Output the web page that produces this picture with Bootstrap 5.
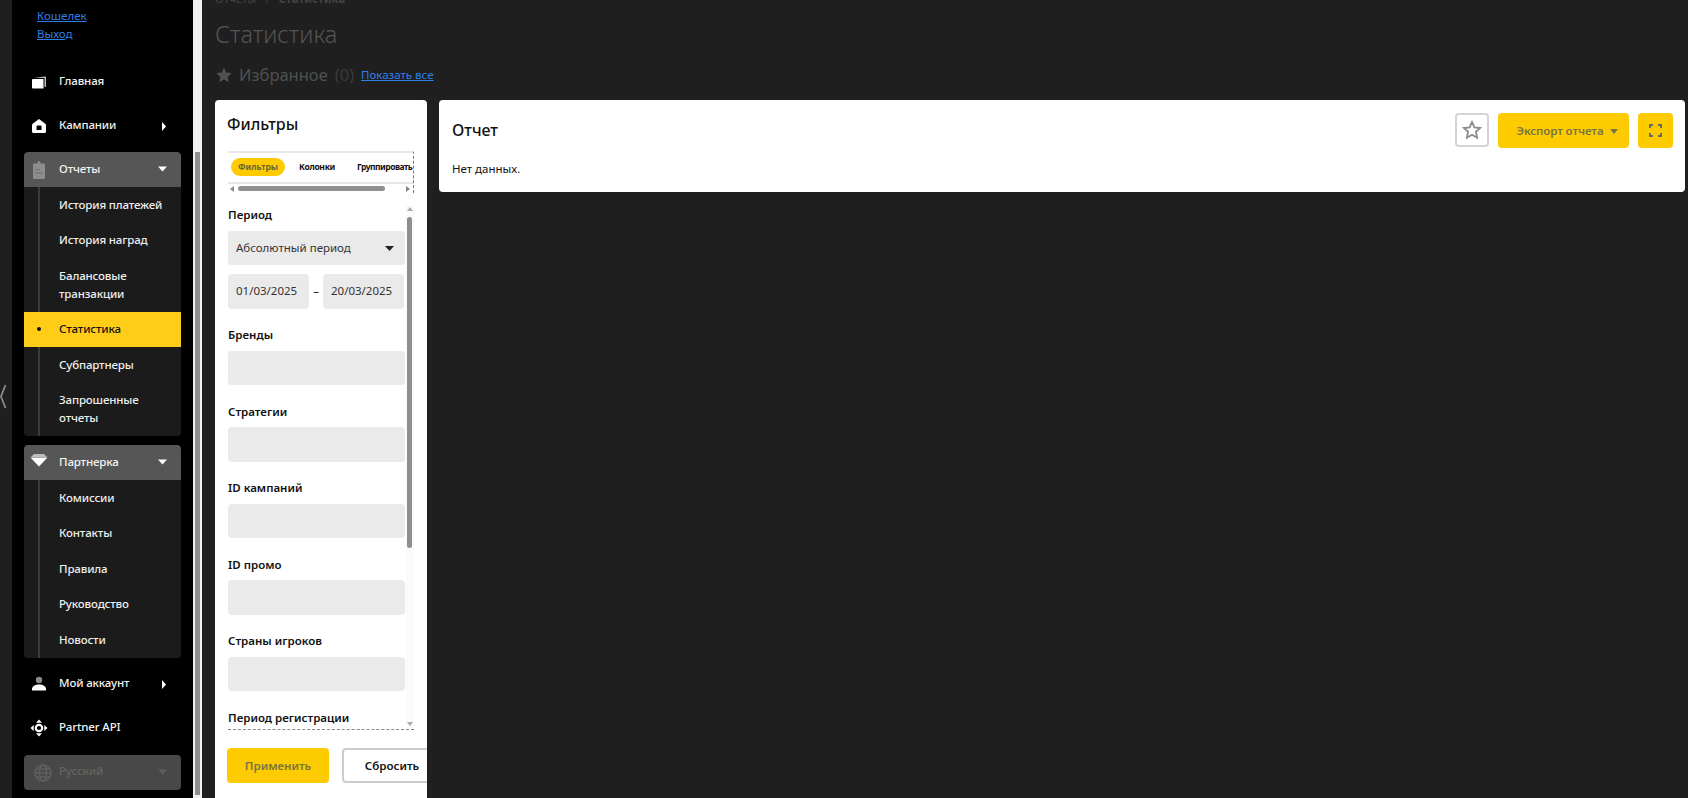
<!DOCTYPE html>
<html lang="ru">
<head>
<meta charset="utf-8">
<title>Статистика</title>
<link href="https://cdn.jsdelivr.net/npm/bootstrap@5.3.0/dist/css/bootstrap.min.css" rel="stylesheet">
<style>
html,body{height:798px;overflow:hidden}
body{background:#1f1f1f;font-family:"Noto Sans",sans-serif;font-size:11.5px;color:#111}
.rail{width:12px;flex:none}
.rail svg{display:block;margin-top:384px}
.side{width:181px;flex:none;background:#000;height:798px;padding:7px 12px 0}
.side-links{padding-left:13px;height:57px;line-height:18px}
.side-links a{display:block;color:#2f7fe8}
.side-strip{width:9px;flex:none;background:#f1f1f1;height:798px;padding:152px 2px 3px}
.side-thumb{height:100%;background:#8f8f8f;width:5px}
.mrow{height:36px;margin-bottom:8px;padding-bottom:2px;color:#f3f3f3;font-weight:500;letter-spacing:-.15px;display:flex;align-items:center;position:relative;padding-left:35px}
.mrow svg.mi{position:absolute;left:5px;top:8px}
.mrow svg.ar{position:absolute;right:14px;top:14px}
.mgroup{background:#1b1b1b;border-radius:4px;overflow:hidden;margin-bottom:9px;position:relative}
.mgroup.last-group{margin-bottom:8px}
.mgroup::before{content:"";position:absolute;left:14px;top:35px;bottom:0;width:2px;background:#3a3a3a}
.mhead{height:35px;background:#565656;margin:0;border-radius:4px 4px 0 0}
.msub{display:block;position:relative;padding:8.75px 6px 8.75px 35px;line-height:18px;color:#eee;font-weight:500;letter-spacing:-.15px}
.msub.on{background:#ffcd17;color:#111;z-index:1}
.msub.on::before{content:"";position:absolute;left:13px;top:15.5px;width:4px;height:4px;border-radius:50%;background:#111}
.mlang{height:35px;background:#484848;border-radius:4px;color:#656565;margin:9px 0 0}
.mlang svg.mi{top:9px;left:10px}
.mainwrap{flex:1;min-width:0;padding:0 3px 0 13px;height:798px;overflow:hidden}
.crumbs{margin-top:-10px;height:28px;line-height:18px;color:#434343}
.crumbs b{font-weight:700}
.crumbs i{font-style:normal;margin:0 9px}
.ttl{font-size:23.500px;font-weight:300;line-height:32px;color:#555;margin:0 0 14px}
.favs{height:22px;margin-bottom:14px;color:#505050;font-size:16.5px;line-height:22px}
.favs svg{margin:0 7px 0 1px}
.favs span{color:#3b3b3b;margin:0 7px}
.favs a{font-size:11.5px;color:#2f7fe8}
.cards-row{gap:12px}
.panel{background:#fff;border-radius:4px;border:0;flex:none}
.pf{width:212px;height:760px;overflow:hidden}
.phd{font-size:16px;font-weight:500;line-height:24px;color:#111}
.pf .phd{padding:12px 12px 1px}
.tabs{margin:14px 13px 0;height:42px;border-top:2px solid #e8e8e8;border-right:1px dashed #777;position:relative;padding:5px 3px 0;font-size:8.500px;font-weight:700}
.tabs span{line-height:18px;white-space:nowrap;flex:none}
.tabs .cur{background:#fdcb00;border-radius:9px;width:54px;text-align:center;color:#6c6535;margin-right:14px}
.tabs .t2{margin-right:22px;letter-spacing:-.3px}
.tabs .t3{letter-spacing:-.5px}
.tabs::after{content:"";position:absolute;left:0;right:0;top:29px;height:2px;background:#e8e8e8}
.hbar{position:absolute;left:10px;top:33px;width:147px;height:5px;border-radius:3px;background:#8f8f8f}
.harr{position:absolute;top:33px;width:0;height:0;border-top:3px solid transparent;border-bottom:3px solid transparent}
.form-area{margin:0 13px;height:537px;overflow:hidden;border-bottom:1px dashed #888;padding:13px 9px 0 0;position:relative}
.vtrack{position:absolute;right:0;top:12px;bottom:0;width:8px;background:#fafafa}
.vthumb{position:absolute;left:1px;top:12px;height:331px;width:5px;border-radius:3px;background:#8f8f8f}
.varr{position:absolute;left:1px;width:0;height:0;border-left:3px solid transparent;border-right:3px solid transparent}
.flabel{font-weight:600;line-height:18px;margin-bottom:6.5px;color:#111}
.fbox{height:34.5px;background:#eaeaea;border-radius:4px;margin-bottom:17.5px;padding:0 8px;line-height:34.5px;color:#333}
.fbox.first{margin-bottom:9px;position:relative}
.fbox.first svg{position:absolute;right:11px;top:15px}
.dash{width:14px;text-align:center;line-height:34.5px}
.dates .fbox{width:81px;white-space:nowrap}
.pact{padding:18px 0 0 12px;gap:13px}
.btn-y{background:#fdcb00;border:0;color:#7a7346;font-weight:600;font-size:11.5px;border-radius:4px;height:34.5px;white-space:nowrap}
.btn-y:hover,.btn-y:disabled{background:#fdcb00;color:#7a7346}
.btn-apply{width:102px;flex:none}
.btn-reset{width:100px;flex:none;height:34.5px;background:#fff;border:2px solid #ccc;border-radius:4px;font-weight:600;font-size:11.5px;color:#111;padding:0}
.pr{flex:1;min-width:0;height:92px;padding:13px 12px 0 13px}
.pr .phd{line-height:34px}
.starb{width:34px;height:34px;border:2px solid #d4d4d4;border-radius:4px;background:#fff;padding:0;margin-right:9px}
.expb{width:131px;margin-right:9px;padding:0 0 0 8px;letter-spacing:-.1px}
.expb svg{margin-left:7px;vertical-align:1px}
.fsb{width:35px;padding:0}
.nodata{margin:12px 0 0;line-height:18px;color:#111}
</style>
</head>
<body class="d-flex">
<div class="rail"><svg width="8" height="26" viewBox="0 0 8 26" fill="none" stroke="#8a8a8a" stroke-width="1.800"><path d="M5.500 1 1 12.500 5.500 24"/></svg></div>
<nav class="side">
  <div class="side-links"><a href="#">Кошелек</a><a href="#">Выход</a></div>
  <div class="mrow"><svg class="mi" width="20" height="20" viewBox="0 0 20 20"><path fill="#fff" d="M4 7h10.500v9.500H4a1 1 0 0 1-1-1V8a1 1 0 0 1 1-1Z"/><path fill="#bbb" d="M5 6l11-1.500c.5 0 1 .4 1 1V15h-1.500V6Z"/></svg>Главная</div>
  <div class="mrow"><svg class="mi" width="20" height="20" viewBox="0 0 20 20"><path fill="#fff" fill-rule="evenodd" d="M10 3l6 4.500c.7.500 1 1 1 2V15.500A1.500 1.500 0 0 1 15.500 17h-11A1.500 1.500 0 0 1 3 15.500V9.500c0-1 .3-1.500 1-2ZM7.500 10.500V14h5v-3.500a1 1 0 0 0-1-1h-3a1 1 0 0 0-1 1Z"/></svg>Кампании<svg class="ar" width="6" height="9" viewBox="0 0 6 9"><path fill="#fff" d="M1 0l4 4.500L1 9Z"/></svg></div>
  <div class="mgroup">
    <div class="mrow mhead"><svg class="mi" width="20" height="20" viewBox="0 0 20 20"><path fill="#8d8d8d" d="M5 3.500h3.500V2.500a1.500 1.500 0 0 1 3 0v1H15a1 1 0 0 1 1 1V18a1 1 0 0 1-1 1H5a1 1 0 0 1-1-1V4.500a1 1 0 0 1 1-1Z"/><path stroke="#6e6e6e" d="M6.500 9.500h4M6.500 13h7"/></svg>Отчеты<svg class="ar" width="9" height="6" viewBox="0 0 9 6"><path fill="#fff" d="M0 .5h9L4.500 5.500Z"/></svg></div>
    <a class="msub text-decoration-none">История платежей</a>
    <a class="msub text-decoration-none">История наград</a>
    <a class="msub text-decoration-none">Балансовые<br>транзакции</a>
    <a class="msub on text-decoration-none">Статистика</a>
    <a class="msub text-decoration-none">Субпартнеры</a>
    <a class="msub text-decoration-none">Запрошенные<br>отчеты</a>
  </div>
  <div class="mgroup last-group">
    <div class="mrow mhead"><svg class="mi" style="left:6px" width="18" height="14" viewBox="0 0 18 14"><path fill="#bdbdbd" d="M4 1h10l3 3H1Z"/><path fill="#fff" d="M.5 4.500h17L9 13.500Z"/></svg>Партнерка<svg class="ar" width="9" height="6" viewBox="0 0 9 6"><path fill="#fff" d="M0 .5h9L4.500 5.500Z"/></svg></div>
    <a class="msub text-decoration-none">Комиссии</a>
    <a class="msub text-decoration-none">Контакты</a>
    <a class="msub text-decoration-none">Правила</a>
    <a class="msub text-decoration-none">Руководство</a>
    <a class="msub text-decoration-none">Новости</a>
  </div>
  <div class="mrow"><svg class="mi" width="20" height="20" viewBox="0 0 20 20"><circle cx="10" cy="6" r="3.200" fill="#8a8a8a"/><path fill="#fff" d="M3 16.500V15c0-2.500 3-4.500 7-4.500s7 2 7 4.500v1.500Z"/></svg>Мой аккаунт<svg class="ar" width="6" height="9" viewBox="0 0 6 9"><path fill="#fff" d="M1 0l4 4.500L1 9Z"/></svg></div>
  <div class="mrow mb-0"><svg class="mi" width="20" height="20" viewBox="0 0 20 20" fill="#fff"><path d="M10 1.500l3 3.200H7ZM10 18.500l-3-3.200h6ZM1.500 10l3.200-3v6ZM18.500 10l-3.200 3V7Z"/><circle cx="10" cy="10" r="3.200" fill="none" stroke="#fff" stroke-width="2.200"/></svg>Partner API</div>
  <div class="mrow mlang"><svg class="mi" width="18" height="18" viewBox="0 0 18 18" fill="none" stroke="#5f5f5f" stroke-width="1.500"><circle cx="9" cy="9" r="8"/><ellipse cx="9" cy="9" rx="3.500" ry="8"/><path d="M1 9h16M2 5h14M2 13h14"/></svg>Русский<svg class="ar" width="9" height="6" viewBox="0 0 9 6"><path fill="#5f5f5f" d="M0 .5h9L4.500 5.500Z"/></svg></div>
</nav>
<div class="side-strip"><div class="side-thumb"></div></div>
<main class="mainwrap">
  <div class="crumbs">Отчеты<i>/</i><b>Статистика</b></div>
  <h1 class="ttl">Статистика</h1>
  <div class="favs d-flex align-items-center"><svg width="16" height="16" viewBox="0 0 16 16"><path fill="#505050" d="M8 .5l2.300 5 5.400.6-4 3.700 1.100 5.400L8 12.500l-4.800 2.700 1.100-5.400-4-3.700 5.400-.6Z"/></svg>Избранное<span>(0)</span><a href="#">Показать все</a></div>
  <div class="d-flex align-items-start cards-row">
    <section class="panel pf">
      <div class="phd">Фильтры</div>
      <div class="tabs d-flex align-items-start"><span class="cur">Фильтры</span><span class="t2">Колонки</span><span class="t3">Группировать</span>
        <i class="harr" style="left:2px;border-right:4px solid #888"></i><i class="hbar"></i><i class="harr" style="right:3px;border-left:4px solid #888"></i></div>
      <div class="form-area">
        <div class="vtrack"><i class="varr" style="top:2px;border-bottom:4px solid #aaa"></i><i class="vthumb"></i><i class="varr" style="bottom:3px;border-top:4px solid #aaa"></i></div>
        <div class="flabel">Период</div>
        <div class="fbox first">Абсолютный период<svg width="9" height="5" viewBox="0 0 9 5"><path fill="#222" d="M0 0h9L4.500 5Z"/></svg></div>
        <div class="dates d-flex"><div class="fbox">01/03/2025</div><div class="dash">–</div><div class="fbox">20/03/2025</div></div>
        <div class="flabel">Бренды</div><div class="fbox"></div>
        <div class="flabel">Стратегии</div><div class="fbox"></div>
        <div class="flabel">ID кампаний</div><div class="fbox"></div>
        <div class="flabel">ID промо</div><div class="fbox"></div>
        <div class="flabel">Страны игроков</div><div class="fbox"></div>
        <div class="flabel">Период регистрации</div><div class="fbox"></div>
      </div>
      <div class="pact d-flex"><button class="btn btn-y btn-apply">Применить</button><button class="btn btn-reset">Сбросить</button></div>
    </section>
    <section class="panel pr">
      <div class="d-flex align-items-center">
        <div class="phd flex-grow-1">Отчет</div>
        <button class="btn starb d-flex align-items-center justify-content-center"><svg width="20" height="20" viewBox="0 0 20 20"><path fill="none" stroke="#8a8a8a" stroke-width="1.800" d="M10 2l2.400 5.400 5.800.6-4.300 3.900 1.200 5.800L10 14.800l-5.100 2.900 1.200-5.800L1.800 8l5.800-.6Z"/></svg></button>
        <button class="btn btn-y expb">Экспорт отчета<svg width="8" height="5" viewBox="0 0 8 5"><path fill="#7a7346" d="M0 0h8L4 5Z"/></svg></button>
        <button class="btn btn-y fsb d-flex align-items-center justify-content-center"><svg width="13" height="13" viewBox="0 0 13 13" fill="none" stroke="#6c6a50" stroke-width="2"><path d="M1 4V1h3M9 1h3v3M12 9v3H9M4 12H1V9"/></svg></button>
      </div>
      <p class="nodata">Нет данных.</p>
    </section>
  </div>
</main>
</body>
</html>
